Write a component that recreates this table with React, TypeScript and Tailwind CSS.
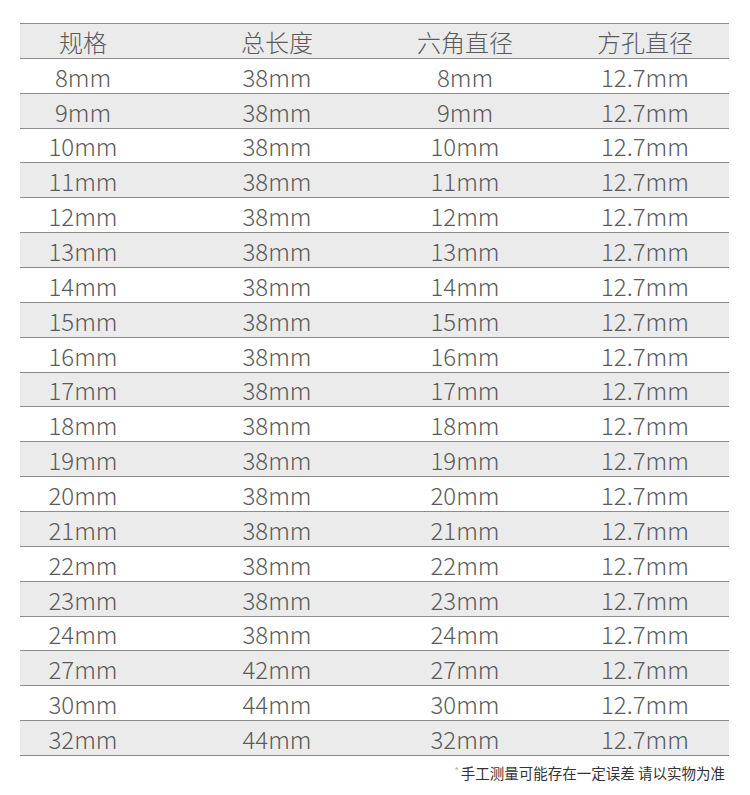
const rows: [string, string, string, string][] = [
  ["8mm", "38mm", "8mm", "12.7mm"],
  ["9mm", "38mm", "9mm", "12.7mm"],
  ["10mm", "38mm", "10mm", "12.7mm"],
  ["11mm", "38mm", "11mm", "12.7mm"],
  ["12mm", "38mm", "12mm", "12.7mm"],
  ["13mm", "38mm", "13mm", "12.7mm"],
  ["14mm", "38mm", "14mm", "12.7mm"],
  ["15mm", "38mm", "15mm", "12.7mm"],
  ["16mm", "38mm", "16mm", "12.7mm"],
  ["17mm", "38mm", "17mm", "12.7mm"],
  ["18mm", "38mm", "18mm", "12.7mm"],
  ["19mm", "38mm", "19mm", "12.7mm"],
  ["20mm", "38mm", "20mm", "12.7mm"],
  ["21mm", "38mm", "21mm", "12.7mm"],
  ["22mm", "38mm", "22mm", "12.7mm"],
  ["23mm", "38mm", "23mm", "12.7mm"],
  ["24mm", "38mm", "24mm", "12.7mm"],
  ["27mm", "42mm", "27mm", "12.7mm"],
  ["30mm", "44mm", "30mm", "12.7mm"],
  ["32mm", "44mm", "32mm", "12.7mm"],
]

const header: [string, string, string, string] = ["规格", "总长度", "六角直径", "方孔直径"]

function Row({ cells, gray }: { cells: [string, string, string, string]; gray: boolean }) {
  return (
    <div
      className={
        "grid grid-cols-[126px_262px_153px_168px] items-center border-b border-[#8c8c8c] pt-[2px] " +
        (gray ? "bg-[#ebebeb]" : "bg-white")
      }
    >
      <div className="text-center">{cells[0]}</div>
      <div className="text-center">{cells[1]}</div>
      <div className="pr-[39px] text-center">{cells[2]}</div>
      <div className="text-center">{cells[3]}</div>
    </div>
  )
}

export default function App() {
  return (
    <div className="h-[795px] w-[750px] bg-white font-['Noto_Sans_CJK_SC',sans-serif] text-[#5a5a5a]">
      <div className="ml-[20px] w-[709px] pt-[23px]">
        <div className="grid h-[733px] grid-rows-[repeat(21,minmax(0,1fr))] border-t border-[#8c8c8c] text-[24px] font-light leading-none">
          <Row cells={header} gray />
          {rows.map((r, i) => (
            <Row key={i} cells={r} gray={i % 2 === 1} />
          ))}
        </div>
      </div>
      <div className="mt-[10px] flex justify-end pr-[25px] text-[14.5px] leading-none text-[#333]">
        <span className="mr-[2px] text-[9px] text-[#aaa]">*</span>
        <span>手工测量可能存在一定误差 请以实物为准</span>
      </div>
    </div>
  )
}
